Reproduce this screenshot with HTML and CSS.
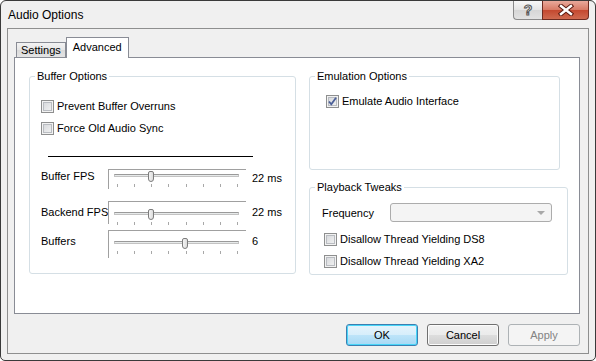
FILE: index.html
```html
<!DOCTYPE html>
<html lang="en">
<head>
    <meta charset="UTF-8">
    <title>Audio Options</title>
    <link rel="stylesheet" href="styles.css">
</head>
<body>
    <div class="window">
        <div class="titlebar">
            <span class="title">Audio Options</span>
            <div class="caption-buttons">
                <div class="cap-btn help"><span class="help-glyph">?</span></div>
                <div class="cap-btn close">
                    <svg width="16" height="12" viewBox="0 0 16 12">
                        <path d="M3 2 L13 10 M13 2 L3 10" stroke="#5a1a10" stroke-width="4.4" stroke-linecap="square"></path>
                        <path d="M3 2 L13 10 M13 2 L3 10" stroke="#ffffff" stroke-width="2.4" stroke-linecap="square"></path>
                    </svg>
                </div>
            </div>
        </div>

        <div class="client">
            <div class="tabs">
                <div class="tab">Settings</div>
                <div class="tab active">Advanced</div>
            </div>

            <div class="tab-panel">
                <div class="group buffer">
                    <div class="group-title">Buffer Options</div>
                    <div class="group-body">
                        <div class="check-row"><span class="cb"></span>Prevent Buffer Overruns</div>
                        <div class="check-row"><span class="cb"></span>Force Old Audio Sync</div>
                        <div class="divider"></div>

                        <div class="slider-row first">
                            <span class="slider-label">Buffer FPS</span>
                            <div class="slider">
                                <div class="track"></div>
                                <div class="thumb" style="left: 39px"></div>
                                <div class="ticks"><i></i><i></i><i></i><i></i><i></i><i></i><i></i><i></i></div>
                            </div>
                            <span class="slider-value">22 ms</span>
                        </div>

                        <div class="slider-row">
                            <span class="slider-label">Backend FPS</span>
                            <div class="slider">
                                <div class="track"></div>
                                <div class="thumb" style="left: 39px"></div>
                                <div class="ticks"><i></i><i></i><i></i><i></i><i></i><i></i><i></i><i></i></div>
                            </div>
                            <span class="slider-value">22 ms</span>
                        </div>

                        <div class="slider-row last">
                            <span class="slider-label">Buffers</span>
                            <div class="slider">
                                <div class="track"></div>
                                <div class="thumb" style="left: 73px"></div>
                                <div class="ticks"><i></i><i></i><i></i><i></i><i></i><i></i><i></i><i></i></div>
                            </div>
                            <span class="slider-value">6</span>
                        </div>
                    </div>
                </div>

                <div class="col-right">
                    <div class="group emulation">
                        <div class="group-title">Emulation Options</div>
                        <div class="group-body">
                            <div class="check-row">
                                <span class="cb checked">
                                    <svg width="11" height="11" viewBox="0 0 11 11">
                                        <path d="M2 5.5 L4.3 8.3 L9 1.8" fill="none" stroke="#4b5f98" stroke-width="1.8"></path>
                                    </svg>
                                </span>Emulate Audio Interface
                            </div>
                        </div>
                    </div>

                    <div class="group playback">
                        <div class="group-title">Playback Tweaks</div>
                        <div class="group-body">
                            <div class="combo-row">
                                <span class="combo-label">Frequency</span>
                                <div class="combo"><span class="arrow"></span></div>
                            </div>
                            <div class="check-row"><span class="cb"></span>Disallow Thread Yielding DS8</div>
                            <div class="check-row"><span class="cb"></span>Disallow Thread Yielding XA2</div>
                        </div>
                    </div>
                </div>
            </div>

            <div class="dialog-buttons">
                <button class="btn default">OK</button>
                <button class="btn">Cancel</button>
                <button class="btn" disabled>Apply</button>
            </div>
        </div>
    </div>
</body>
</html>
```

FILE: styles.css
```css
* {
    margin: 0;
    padding: 0;
    box-sizing: border-box;
}

body {
    font-family: "Liberation Sans", Arial, sans-serif;
    font-size: 11px;
    color: #000;
    background: #fff;
}

.window {
    width: 596px;
    height: 361px;
    border: 1px solid #3a3a3a;
    border-radius: 6px 6px 5px 5px;
    background: #f0f0f0;
    display: flex;
    flex-direction: column;
    padding: 0 6px 6px;
}

/* title bar */
.titlebar {
    height: 27px;
    display: flex;
    justify-content: space-between;
    align-items: flex-start;
    padding-left: 1px;
}

.title {
    font-size: 12px;
    line-height: 28px;
}

.caption-buttons {
    display: flex;
}

.cap-btn {
    height: 19px;
    display: flex;
    align-items: center;
    justify-content: center;
    border: 1px solid #8a8a8a;
    border-top: none;
}

.help {
    width: 29px;
    border-right: none;
    border-radius: 0 0 0 4px;
    background: linear-gradient(#f8f8f8, #e4e4e4 50%, #d6d6d6 51%, #e2e2e2);
}

.help-glyph {
    font-weight: bold;
    font-size: 14px;
    line-height: 14px;
    color: #fff;
    -webkit-text-stroke: 1px #555;
}

.close {
    width: 47px;
    border-color: #6e2b20;
    border-radius: 0 0 4px 0;
    background: linear-gradient(#e9a99b, #d77964 50%, #c4482f 51%, #cf6a50);
}

/* client area */
.client {
    flex: 1;
    border: 1px solid #8e8f8f;
    padding: 8px 0 0;
    display: flex;
    flex-direction: column;
}

.tabs {
    display: flex;
    align-items: flex-end;
    height: 20px;
    padding-left: 8px;
}

.tab {
    height: 15px;
    line-height: 14px;
    padding: 0 4px;
    border: 1px solid #898c95;
    border-bottom: none;
    background: linear-gradient(#f3f3f3, #e6e6e6 50%, #dadada 51%, #e4e4e4);
}

.tab.active {
    height: 21px;
    line-height: 18px;
    padding: 0 6px;
    margin-bottom: -1px;
    background: #fff;
    position: relative;
    z-index: 1;
}

.tab-panel {
    height: 257px;
    margin: 0 8px 0 6px;
    border: 1px solid #898c95;
    background: #fff;
    padding: 18px 0 0 14px;
    display: flex;
    align-items: flex-start;
    gap: 13px;
}

/* group boxes */
.group {
    border: 1px solid #d5dfe5;
    border-radius: 3px;
}

.group-title {
    width: fit-content;
    margin: -7px 0 0 5px;
    padding: 0 2px;
    line-height: 13px;
    background: #fff;
}

.buffer {
    width: 267px;
    height: 198px;
    flex-shrink: 0;
}

.buffer .group-body {
    padding: 17px 0 0 11px;
}

.col-right {
    display: flex;
    flex-direction: column;
}

.emulation {
    width: 251px;
    height: 94px;
}

.emulation .group-body {
    padding: 12px 0 0 16px;
}

.playback {
    width: 259px;
    height: 88px;
    margin-top: 17px;
}

.playback .group-body {
    padding: 9px 0 0 12px;
}

/* checkboxes */
.check-row {
    display: flex;
    align-items: center;
    gap: 3px;
    height: 13px;
    line-height: 13px;
    white-space: nowrap;
}

.check-row + .check-row {
    margin-top: 9px;
}

.playback .check-row {
    margin-left: 2px;
}

.playback .combo-row + .check-row {
    margin-top: 11px;
}

.cb {
    flex-shrink: 0;
    width: 13px;
    height: 13px;
    border: 1px solid #8e8f8f;
    background: linear-gradient(135deg, #d2d4d8, #f5f5f5);
    box-shadow: inset 0 0 0 1px #f2f2f2, inset 0 0 0 2px #b9bcc1;
    display: flex;
    align-items: center;
    justify-content: center;
}

.divider {
    width: 205px;
    height: 1px;
    margin: 21px 0 0 7px;
    background: #000;
}

/* sliders */
.slider-row {
    display: flex;
    align-items: flex-start;
    margin-top: 12px;
}

.slider-row.last {
    margin-top: 6px;
}

.slider-label {
    width: 67px;
    flex-shrink: 0;
    white-space: nowrap;
    line-height: 13px;
    padding-top: 5px;
}

.slider-value {
    margin-left: 6px;
    white-space: nowrap;
    line-height: 13px;
    padding-top: 5px;
}

.slider {
    position: relative;
    flex-shrink: 0;
    width: 138px;
    height: 23px;
    border-top: 1px solid #a0a0a0;
    border-left: 1px solid #a0a0a0;
    padding-top: 10px;
}

.slider-row.first .slider {
    height: 20px;
    padding-top: 4px;
}

.slider-row.first .slider-label {
    padding-top: 1px;
}

.slider-row.first .slider-value {
    padding-top: 3px;
}

.slider-row.last .slider {
    height: 28px;
}

.track {
    width: 125px;
    height: 3px;
    margin-left: 5px;
    border: 1px solid #c3c3c3;
    border-top-color: #9a9a9a;
    background: #e7eaea;
}

.thumb {
    position: absolute;
    top: 1px;
    width: 6px;
    height: 11px;
    border: 1px solid #7c7c7c;
    border-radius: 2px 2px 3px 3px;
    background: linear-gradient(90deg, #f4f4f4, #dcdcdc);
}

.slider-row:not(.first) .thumb {
    top: 7px;
}

.ticks {
    display: flex;
    justify-content: space-between;
    padding: 0 8px;
    margin-top: 7px;
}

.ticks i {
    width: 1px;
    height: 3px;
    background: #a8a8a8;
}

/* combo box */
.combo-row {
    display: flex;
    align-items: center;
    height: 19px;
}

.combo-label {
    width: 68px;
}

.combo {
    width: 162px;
    height: 19px;
    border: 1px solid #acacac;
    border-radius: 3px;
    background: #f4f4f4;
    display: flex;
    align-items: center;
    justify-content: flex-end;
    padding-right: 6px;
}

.arrow {
    width: 0;
    height: 0;
    border-left: 4px solid transparent;
    border-right: 4px solid transparent;
    border-top: 4px solid #a8a8a8;
}

/* dialog buttons */
.dialog-buttons {
    display: flex;
    justify-content: flex-end;
    gap: 9px;
    margin: 10px 8px 0 0;
}

.btn {
    width: 72px;
    height: 22px;
    border: 1px solid #707070;
    border-radius: 3px;
    font-family: inherit;
    font-size: 11px;
    color: #000;
    background: linear-gradient(#f2f2f2, #ebebeb 50%, #dddddd 51%, #cfcfcf);
    box-shadow: inset 0 0 0 1px #fcfcfc;
}

.btn.default {
    border-color: #3c7fb1;
    background: linear-gradient(#e5f4fc, #d7eefb 50%, #bde4f9 51%, #a7d9f5);
    box-shadow: inset 0 0 0 1px #48d5f8;
}

.btn:disabled {
    border-color: #adb2b5;
    background: #f4f4f4;
    color: #838383;
    box-shadow: none;
}
```
